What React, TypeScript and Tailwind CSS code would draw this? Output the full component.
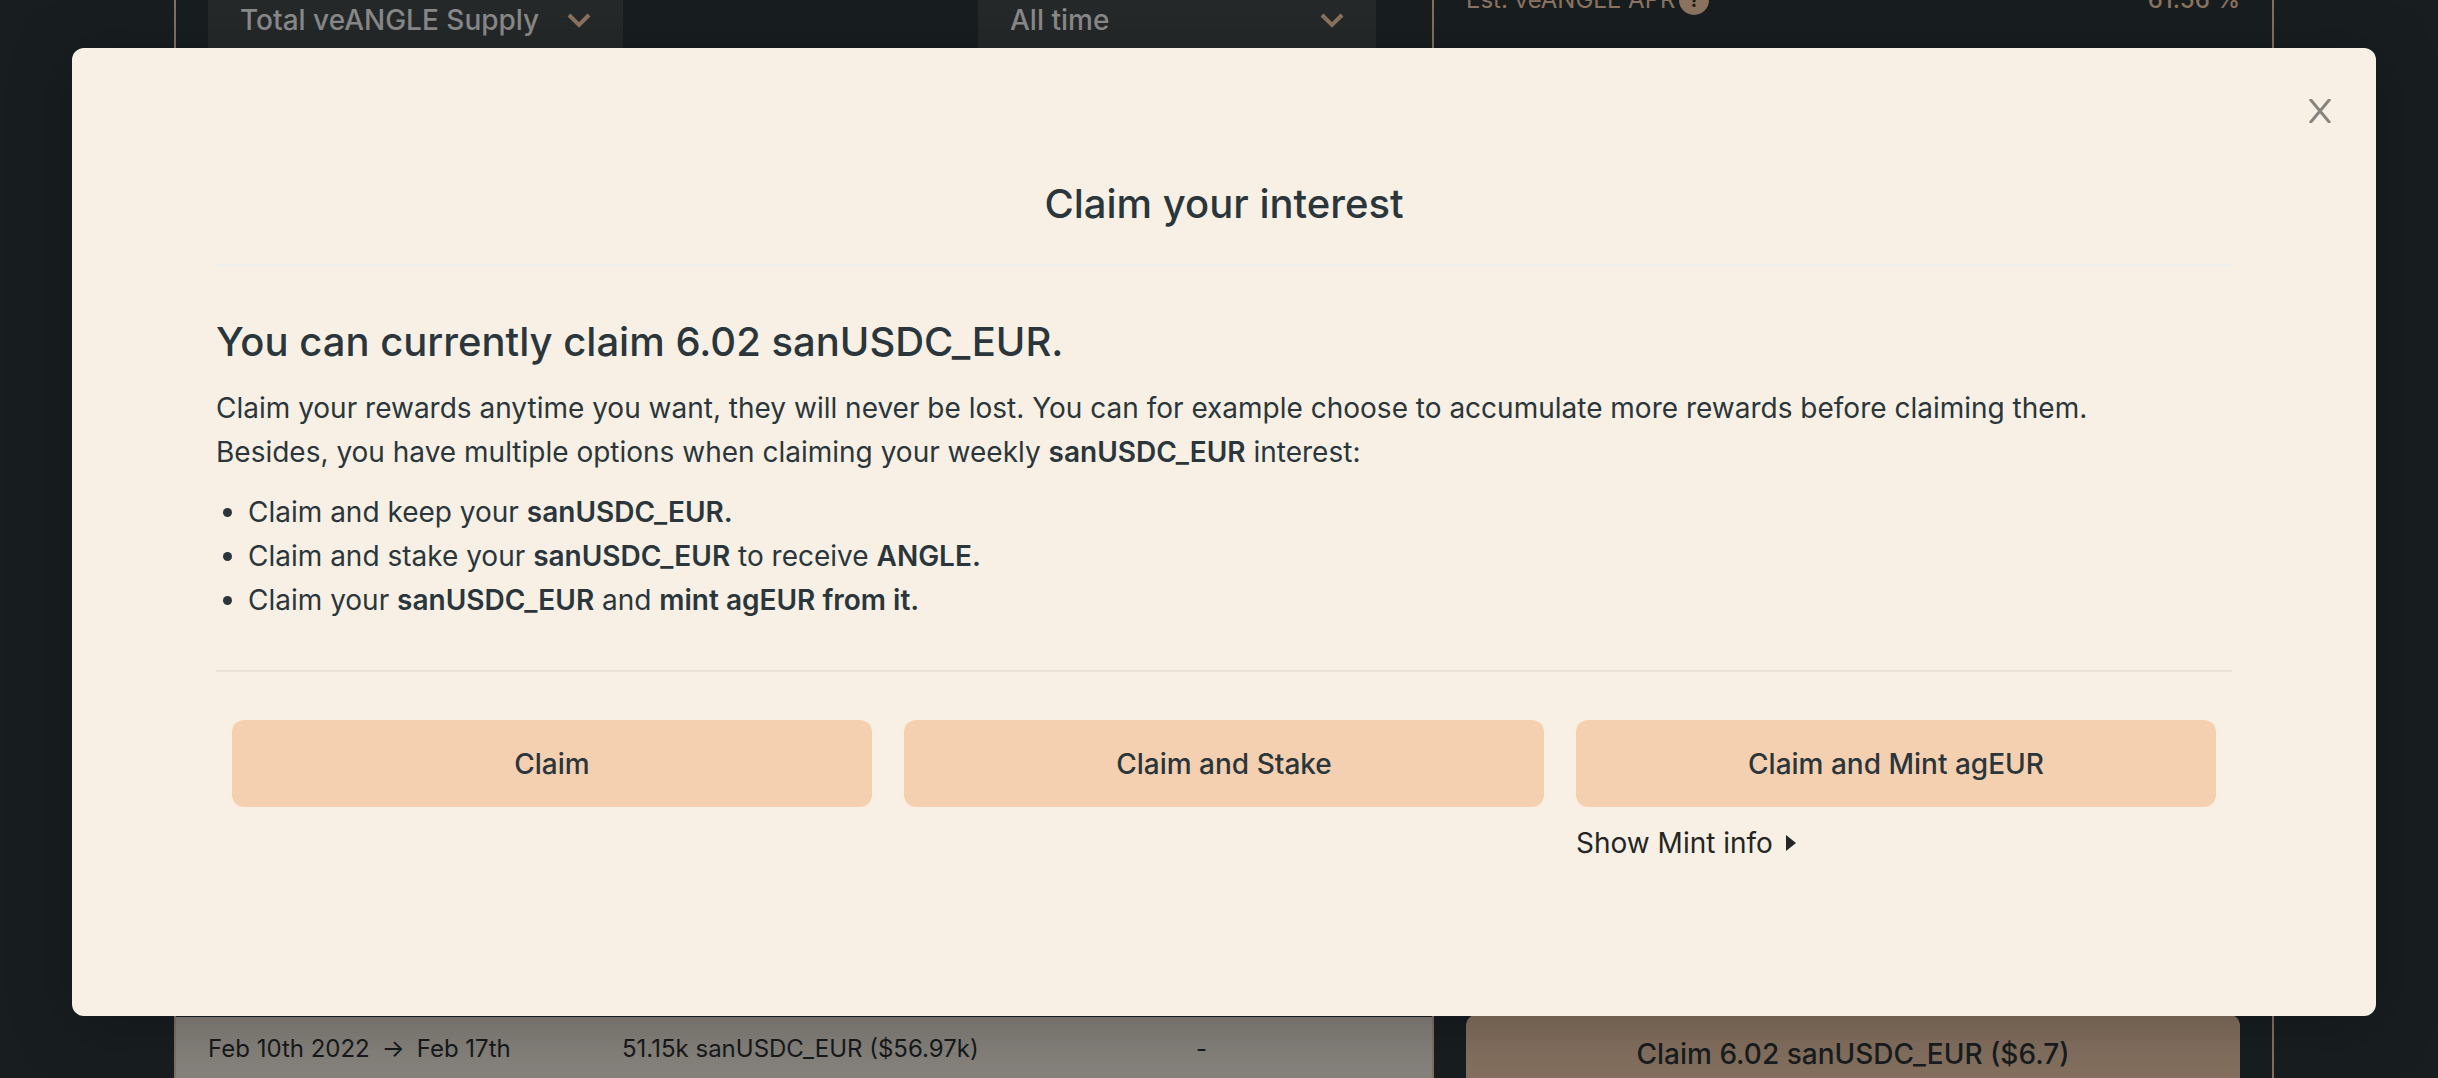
const Chevron = () => (
  <svg className="h-4 w-6 shrink-0" viewBox="0 0 24 16" fill="none" stroke="#8c7460" strokeWidth="4">
    <path d="M2 3 L12 13 L22 3" />
  </svg>
);

const claimOptions = ["Claim", "Claim and Stake", "Claim and Mint agEUR"];

function Backdrop() {
  return (
    <div className="flex min-h-screen bg-[#181e20]">
      <main className="mr-[164px] ml-[174px] grid flex-1 grid-cols-[3fr_2fr]">
        <section className="flex flex-col justify-between border-x-2 border-[#84705f]">
          <div className="flex h-12 justify-between pr-14 pl-8 text-[28px] leading-10 font-medium text-[#8a8b8a]">
            <button className="flex w-[415px] items-center justify-between bg-[#25292a] pr-8 pb-2 pl-8">
              Total veANGLE Supply
              <Chevron />
            </button>
            <button className="flex w-[398px] items-center justify-between bg-[#25292a] pr-8 pb-2 pl-8">
              All time
              <Chevron />
            </button>
          </div>
          <div className="grid h-[61px] grid-cols-[414px_1fr_434px] bg-[#86827c] pl-8 text-2xl leading-[64px] text-[#171a1b]">
            <span className="flex gap-3">
              <span>Feb 10th 2022</span>
              <span>→</span>
              <span>Feb 17th</span>
            </span>
            <span>51.15k sanUSDC_EUR ($56.97k)</span>
            <span className="pl-[198px]">-</span>
          </div>
        </section>
        <section className="flex flex-col justify-between border-r-2 border-[#84705f] px-8 text-[#8c7460]">
          <div className="-mt-5 flex items-center justify-between text-2xl leading-10">
            <div className="flex items-center gap-1">
              <span>Est. veANGLE APR</span>
              <span className="flex size-[30px] items-center justify-center rounded-full bg-[#8c7460] text-xl font-bold text-[#181e20]">
                ?
              </span>
            </div>
            <span className="font-medium">61.56 %</span>
          </div>
          <button className="h-16 rounded-t-xl bg-[#85705f] pt-4 text-[28px] leading-[44px] font-medium text-[#181e20]">
            Claim 6.02 sanUSDC_EUR ($6.7)
          </button>
        </section>
      </main>
    </div>
  );
}

export default function App() {
  return (
    <div className="relative min-h-screen overflow-hidden font-['Inter',sans-serif]">
      <Backdrop />
      <div className="absolute inset-0 pt-12 pr-[62px] pb-[62px] pl-[72px]">
        <div
          role="dialog"
          aria-labelledby="dialog-title"
          className="relative h-full rounded-xl bg-[#f8f0e5] px-36 pt-32 text-[28px] leading-[44px] text-[#2a363b] shadow-[0_8px_64px_rgba(0,0,0,0.25)]"
        >
          <button aria-label="Close" className="absolute top-[51px] right-[44px] text-[#87847e]">
            <svg className="h-6 w-6" viewBox="0 0 24 24" fill="none" stroke="currentColor" strokeWidth="3">
              <path d="M2 0 L22 24 M22 0 L2 24" />
            </svg>
          </button>
          <h1
            id="dialog-title"
            className="border-b-2 border-[#eeeeee] pb-8 text-center text-[40px] leading-[56px] font-medium"
          >
            Claim your interest
          </h1>
          <h2 className="mt-12 text-[40px] leading-[56px] font-medium">You can currently claim 6.02 sanUSDC_EUR.</h2>
          <p className="mt-4">
            Claim your rewards anytime you want, they will never be lost. You can for example choose to accumulate more
            rewards before claiming them.
            <br />
            Besides, you have multiple options when claiming your weekly <b className="font-semibold">sanUSDC_EUR</b>{" "}
            interest:
          </p>
          <ul className="mt-4 list-disc pl-8">
            <li>
              Claim and keep your <b className="font-semibold">sanUSDC_EUR.</b>
            </li>
            <li>
              Claim and stake your <b className="font-semibold">sanUSDC_EUR</b> to receive{" "}
              <b className="font-semibold">ANGLE.</b>
            </li>
            <li>
              Claim your <b className="font-semibold">sanUSDC_EUR</b> and{" "}
              <b className="font-semibold">mint agEUR from it.</b>
            </li>
          </ul>
          <hr className="mt-12 border-t-2 border-[#ebe2d9]" />
          <div className="mt-12 grid grid-cols-3 gap-8 px-4">
            {claimOptions.map((option) => (
              <button key={option} className="h-[87px] rounded-xl bg-[#f5d0b0] font-medium">
                {option}
              </button>
            ))}
            <button className="col-start-3 -mt-[18px] flex items-center gap-3 text-[#252525]">
              Show Mint info
              <svg className="h-4 w-3" viewBox="0 0 12 16" fill="currentColor">
                <path d="M1 0 L11 8 L1 16 Z" />
              </svg>
            </button>
          </div>
        </div>
      </div>
    </div>
  );
}
